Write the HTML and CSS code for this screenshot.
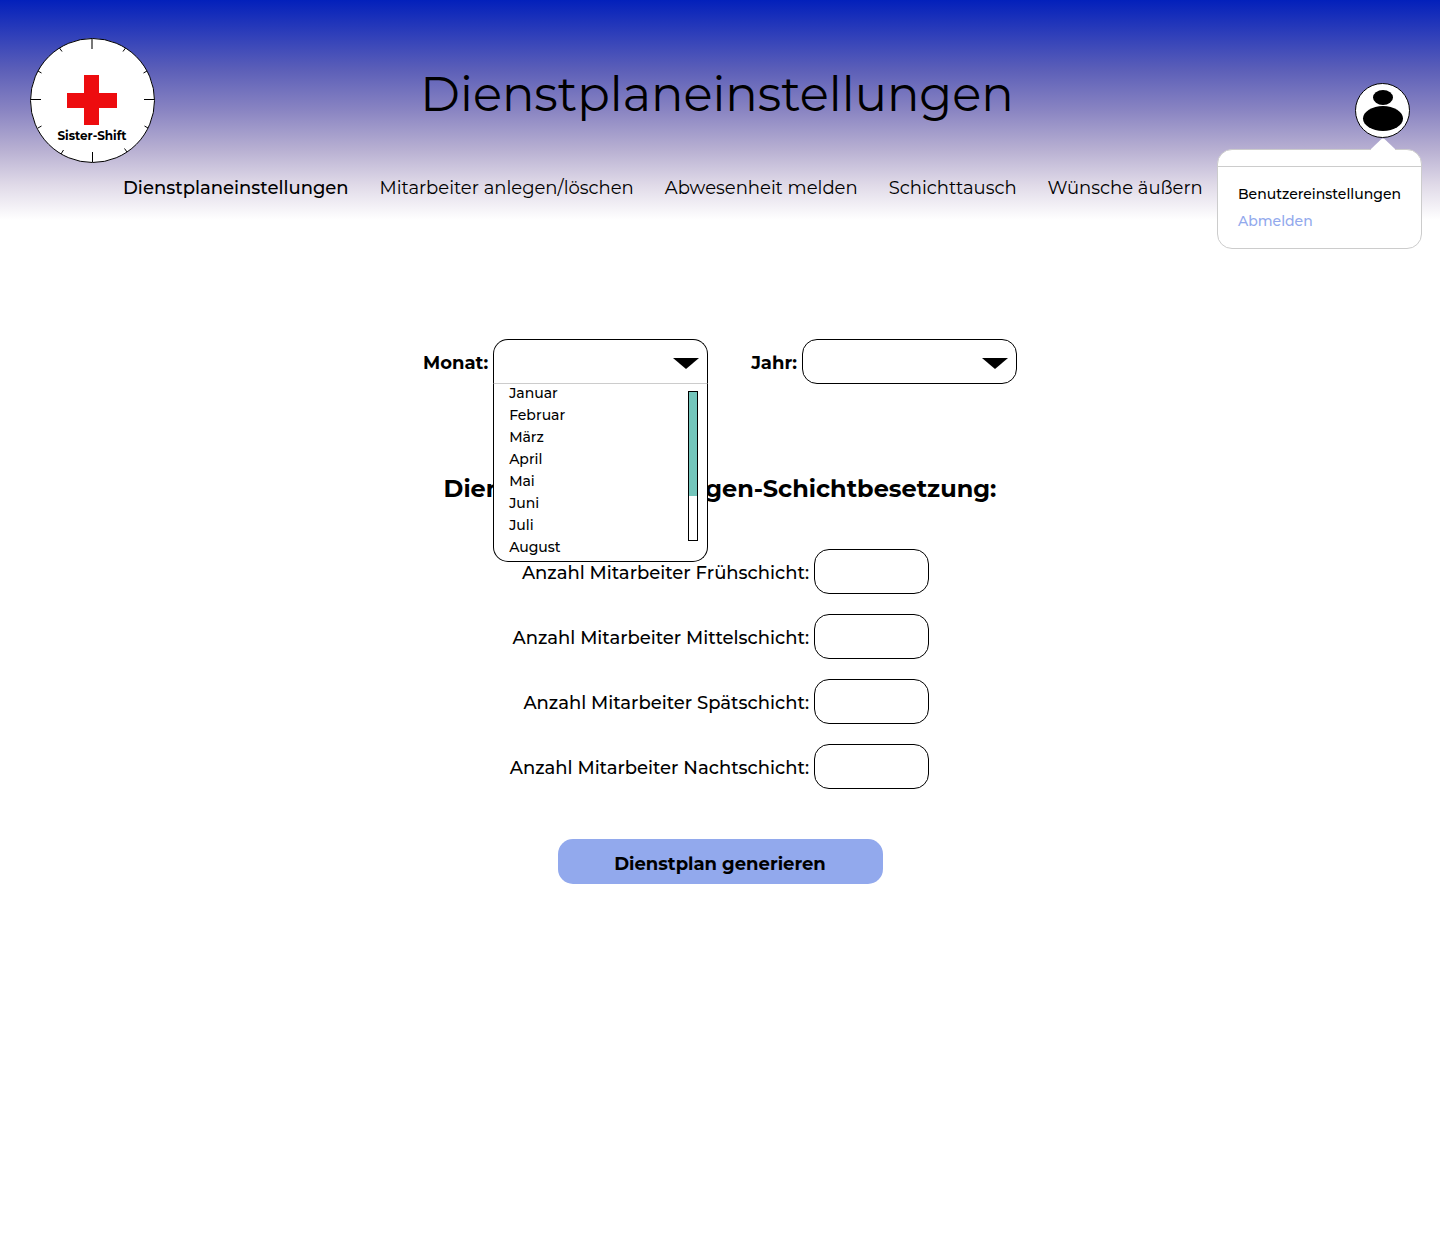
FILE: index.html
```html
<!DOCTYPE html>
<html lang="de">
<head>
<meta charset="utf-8">
<meta name="viewport" content="width=device-width, initial-scale=1">
<title>Dienstplaneinstellungen</title>
<link rel="stylesheet" href="styles.css">
</head>
<body>
<header class="header">
  <div class="header-top">
    <a class="logo" href="#" aria-label="Startseite">
      <svg viewBox="0 0 125 125" width="125" height="125">
        <circle cx="62.5" cy="62.5" r="62" fill="#fff" stroke="#000"/>
        <path d="M54 37h15v18h18v15H69v17H54V70H37V55h17z" fill="#ed0c0f"/>
        <path d="M62 1v10" stroke="#777" stroke-width="2"/>
        <path d="M62.500 114v10M1 61.500h10M114 61.500h10M29.500 10l2.500 3.500M95.500 10l-2.500 3.500M8 33l3.500 2M117 33l-3.500 2M8 90l3.500-2M118 90l-3.500-2M31 116l2.500-4M97 114l-2.500-3.500" stroke="#000" fill="none"/>
        <text class="logo-text" x="62" y="102" text-anchor="middle">Sister-Shift</text>
      </svg>
    </a>
    <h1 class="title">Dienstplaneinstellungen</h1>
    <div class="user">
      <button class="avatar" type="button" aria-label="Benutzermenü" aria-expanded="true">
        <svg class="avatar-icon" viewBox="0 0 55 55" width="55" height="55">
          <circle cx="27.500" cy="27.500" r="27" fill="#fff" stroke="#000"/>
          <ellipse cx="28" cy="14.500" rx="10" ry="7.500"/>
          <ellipse cx="28" cy="35.500" rx="20" ry="12.500"/>
        </svg>
      </button>
      <div class="user-menu">
        <svg class="user-menu-caret" viewBox="0 0 24 12" width="24" height="12"><path d="M0 12V11L10.500 1Q12 0 13.500 1L24 11V12z" fill="#fff"/></svg>
        <a class="user-link" href="#">Benutzereinstellungen</a>
        <a class="user-link user-link-muted" href="#">Abmelden</a>
      </div>
    </div>
  </div>
  <nav class="nav">
    <a class="nav-link nav-link-active" href="#" aria-current="page">Dienstplaneinstellungen</a>
    <a class="nav-link" href="#">Mitarbeiter anlegen/löschen</a>
    <a class="nav-link" href="#">Abwesenheit melden</a>
    <a class="nav-link" href="#">Schichttausch</a>
    <a class="nav-link" href="#">Wünsche äußern</a>
  </nav>
</header>
<main>
  <form class="form">
    <div class="period">
      <div class="period-field">
        <label class="period-label" for="monat">Monat:</label>
        <div class="select select-open">
          <select class="select-control" id="monat"><option></option></select>
          <svg class="select-arrow" viewBox="0 0 26 11" width="26" height="11"><path d="M0 0h26L13 11z"/></svg>
          <div class="options">
            <ul class="options-list" role="listbox" aria-label="Monat">
              <li role="option">Januar</li>
              <li role="option">Februar</li>
              <li role="option">März</li>
              <li role="option">April</li>
              <li role="option">Mai</li>
              <li role="option">Juni</li>
              <li role="option">Juli</li>
              <li role="option">August</li>
            </ul>
            <div class="scrollbar"><div class="scrollbar-thumb"></div></div>
          </div>
        </div>
      </div>
      <div class="period-field">
        <label class="period-label" for="jahr">Jahr:</label>
        <div class="select">
          <select class="select-control" id="jahr"><option></option></select>
          <svg class="select-arrow" viewBox="0 0 26 11" width="26" height="11"><path d="M0 0h26L13 11z"/></svg>
        </div>
      </div>
    </div>
    <h2 class="subtitle">Dienstplaneinstellungen-Schichtbesetzung:</h2>
    <div class="shifts">
      <label class="shift-label" for="frueh">Anzahl Mitarbeiter Frühschicht:</label><input class="shift-input" id="frueh" type="text">
      <label class="shift-label" for="mittel">Anzahl Mitarbeiter Mittelschicht:</label><input class="shift-input" id="mittel" type="text">
      <label class="shift-label" for="spaet">Anzahl Mitarbeiter Spätschicht:</label><input class="shift-input" id="spaet" type="text">
      <label class="shift-label" for="nacht">Anzahl Mitarbeiter Nachtschicht:</label><input class="shift-input" id="nacht" type="text">
    </div>
    <button class="submit" type="submit">Dienstplan generieren</button>
  </form>
</main>
</body>
</html>
```
FILE: styles.css
```css
* { box-sizing: border-box; }

body {
  margin: 0;
  background: #fff;
  color: #000;
  font-family: Montserrat, Inter, sans-serif;
  font-size: 18px;
  font-weight: 500;
}

a { color: inherit; text-decoration: none; }

.header {
  padding: 38px 30px 7px;
  background: linear-gradient(#0320bb 0, #5c5fb8 70px, #8984c2 110px, #b8b0d2 150px, #e0dae8 185px, #fff 220px);
}

.header-top {
  display: grid;
  grid-template-columns: 1fr auto 1fr;
  align-items: center;
}

.logo { display: block; justify-self: start; height: 125px; }
.logo-text { font-size: 12px; font-weight: 700; }

.title {
  margin: 0;
  padding: 0 6px 14px 0;
  font-size: 48px;
  font-weight: 400;
  line-height: 60px;
}

.user { position: relative; justify-self: end; margin-top: 20px; }

.avatar {
  display: block;
  padding: 0;
  border: 0;
  border-radius: 50%;
  background: none;
  cursor: pointer;
}

.avatar-icon { display: block; }

.user-menu {
  position: absolute;
  z-index: 2;
  top: 66px;
  right: -12px;
  width: 205px;
  padding: 31px 0 13px 20px;
  border: 1px solid #ccc;
  border-radius: 15px;
  background: linear-gradient(#ccc, #ccc) 0 16px / 100% 1px no-repeat #fff;
}

.user-menu-caret { position: absolute; top: -12px; right: 26px; }

.user-link {
  display: block;
  font-size: 14px;
  line-height: 27px;
  white-space: nowrap;
}

.user-link-muted { color: #92a9ed; }

.nav {
  display: flex;
  gap: 31px;
  padding-left: 93px;
  font-weight: 400;
  line-height: 50px;
  white-space: nowrap;
}

.nav-link-active { font-weight: 500; }

.form {
  display: flex;
  flex-direction: column;
  align-items: center;
  padding: 119px 20px 60px;
}

.period { display: flex; gap: 43px; }
.period-field { display: flex; align-items: center; gap: 5px; }
.period-label { padding-top: 3px; font-weight: 700; }

.select { position: relative; width: 215px; }

.select-control {
  display: block;
  width: 100%;
  height: 45px;
  padding: 0 40px 0 15px;
  appearance: none;
  border: 1px solid #000;
  border-radius: 15px;
  background: #fff;
  font: inherit;
}

.select-open .select-control {
  border-bottom-color: #ccc;
  border-radius: 15px 15px 0 0;
}

.select-arrow { position: absolute; top: 19px; right: 9px; pointer-events: none; }

.options {
  position: absolute;
  z-index: 1;
  top: 100%;
  left: 0;
  display: flex;
  justify-content: space-between;
  width: 100%;
  padding: 0 9px 3px 15px;
  border: 1px solid #000;
  border-top: 0;
  border-radius: 0 0 15px 15px;
  background: #fff;
}

.options-list {
  margin: -2px 0 0;
  padding: 0;
  list-style: none;
  font-size: 14px;
  line-height: 22px;
}

.scrollbar {
  width: 10px;
  height: 150px;
  margin-top: 7px;
  border: 1px solid #000;
}

.scrollbar-thumb { height: 70%; background: #73c5bb; }

.subtitle {
  margin: 90px 0 45px;
  font-size: 24px;
  font-weight: 700;
  line-height: 30px;
}

.shifts {
  display: grid;
  grid-template-columns: 300px 115px;
  gap: 20px 5px;
  align-items: center;
  padding-right: 2px;
  text-align: right;
  white-space: nowrap;
}

.shift-label { padding-top: 3px; }

.shift-input {
  width: 100%;
  height: 45px;
  padding: 0 15px;
  border: 1px solid #000;
  border-radius: 15px;
  background: #fff;
  font: inherit;
}

.submit {
  width: 325px;
  height: 45px;
  margin-top: 50px;
  padding: 4px 0 0;
  border: 0;
  border-radius: 15px;
  background: #92a9ed;
  color: #000;
  font: inherit;
  font-weight: 700;
  cursor: pointer;
}
```
